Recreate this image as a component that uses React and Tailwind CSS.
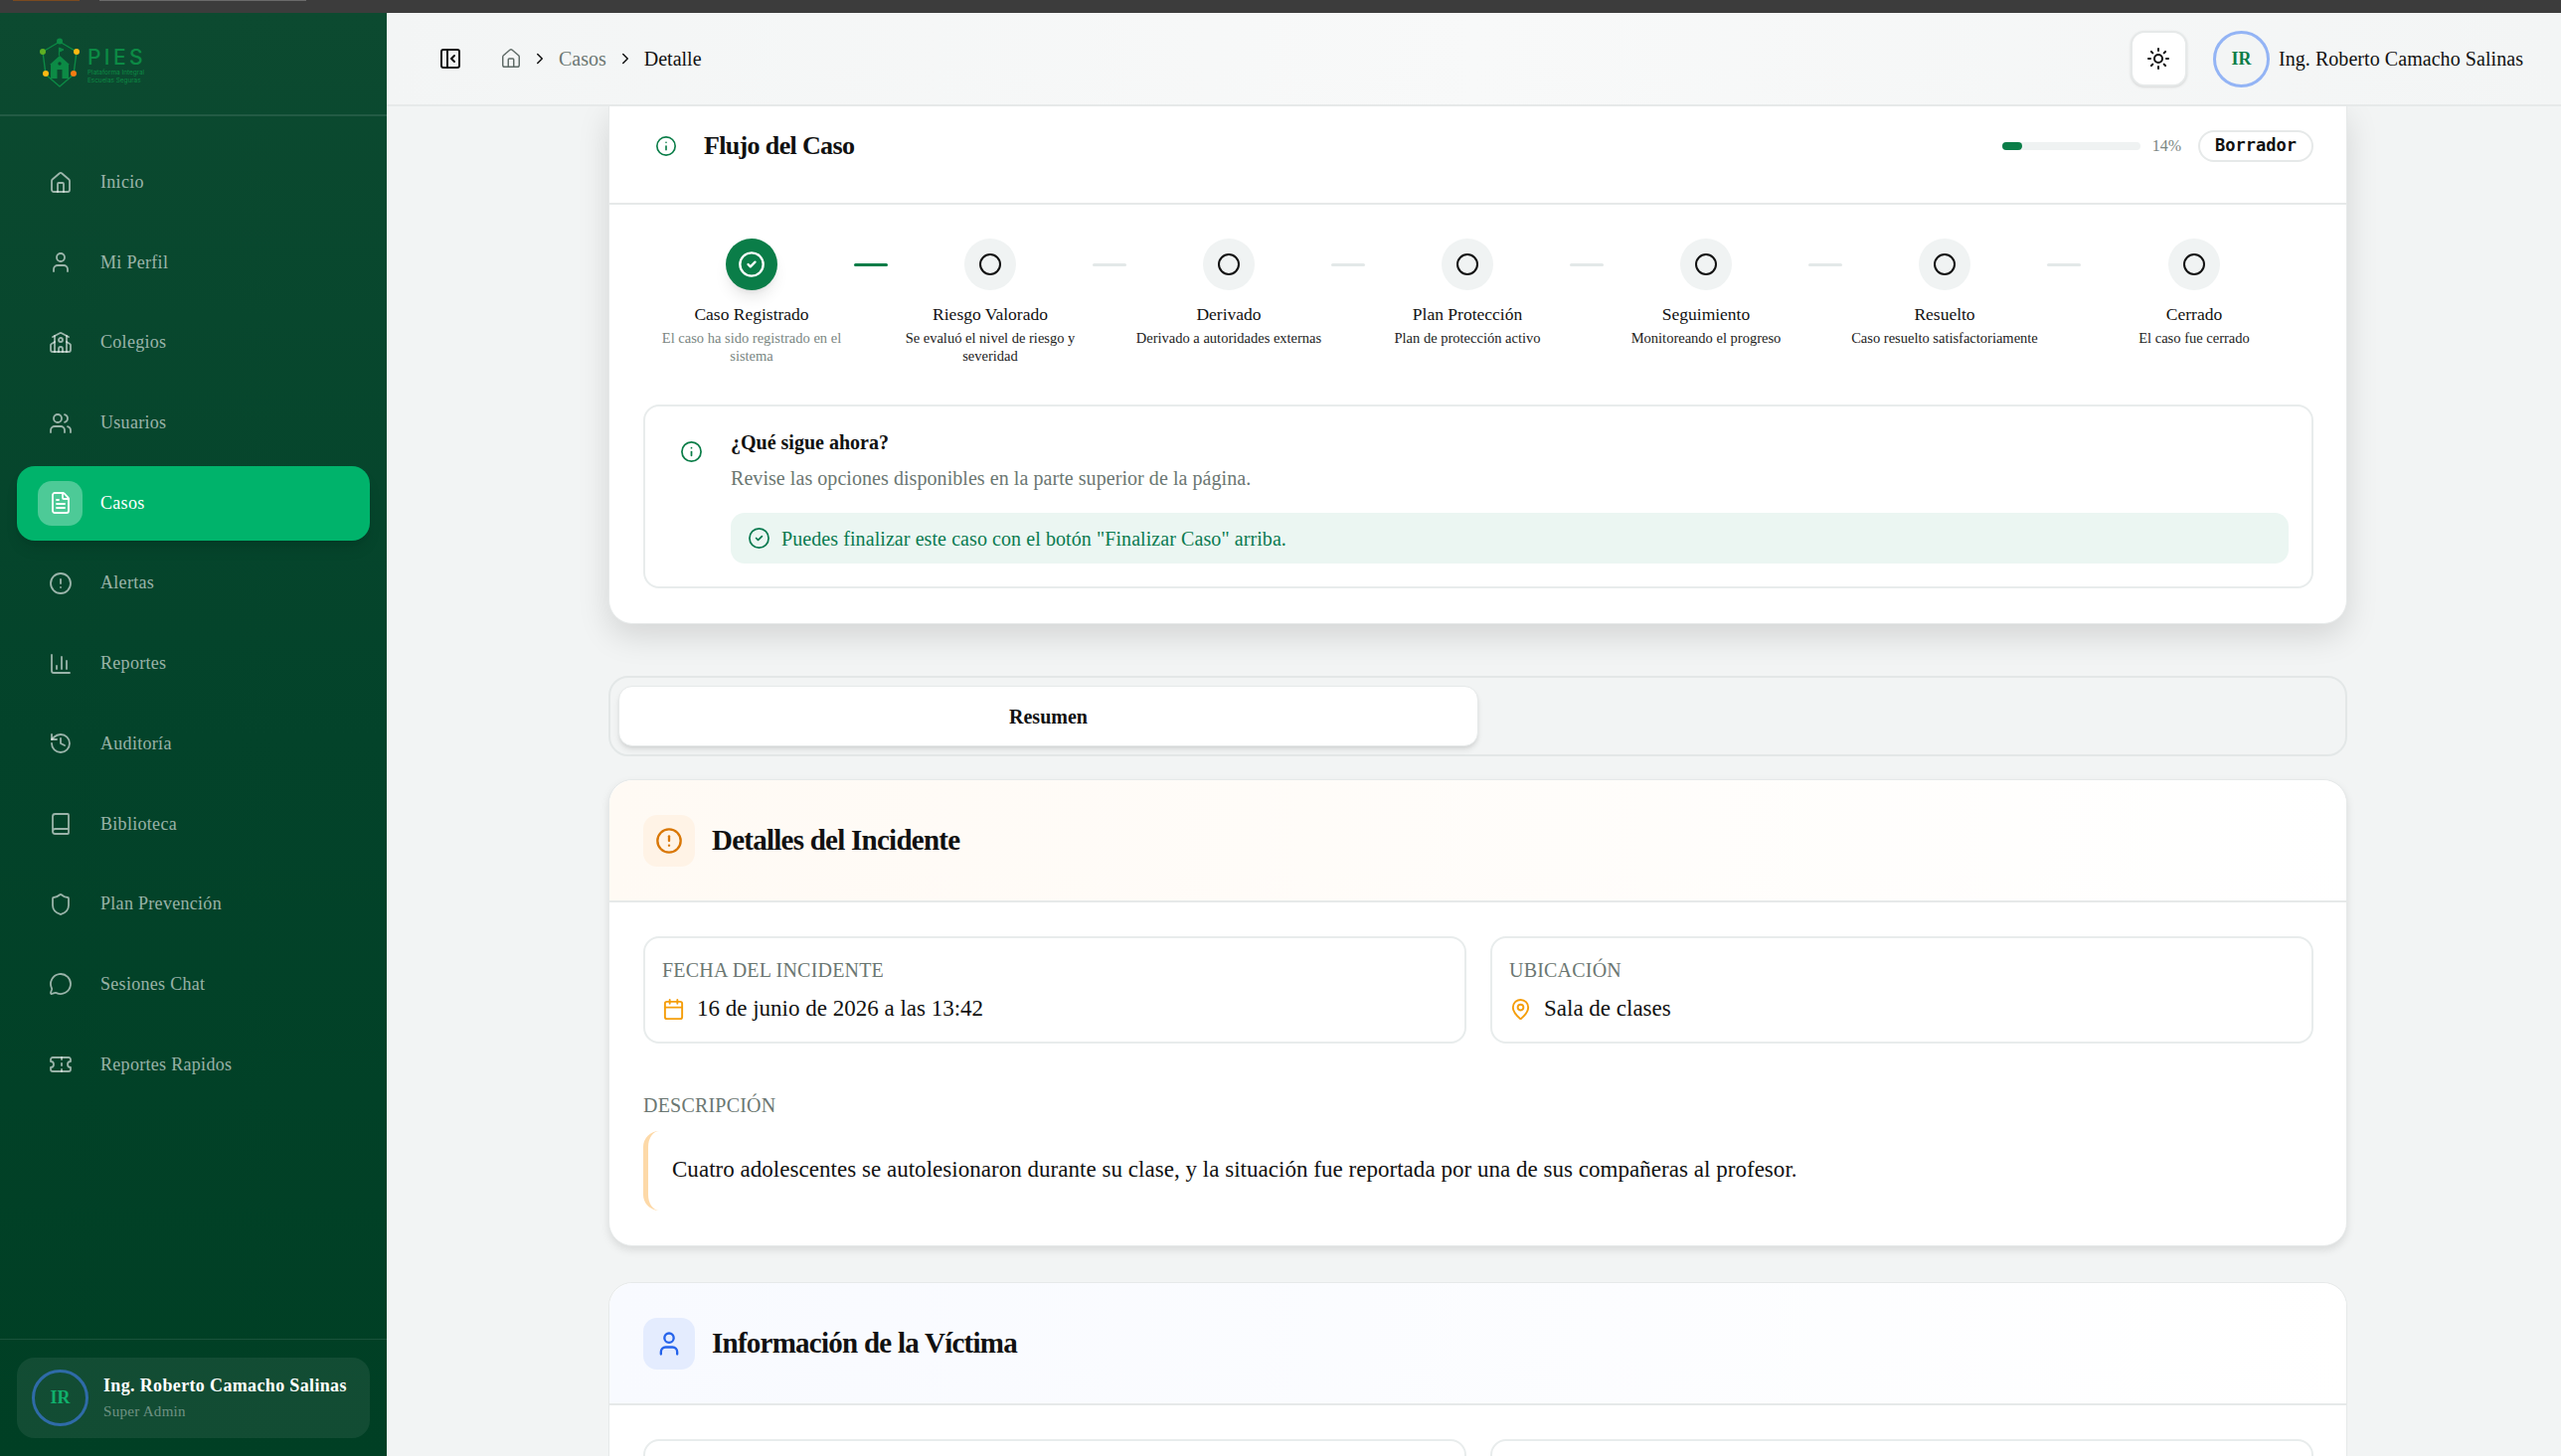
import React from "react";
import {
  Book,
  Calendar,
  ChartColumn,
  ChevronRight,
  Circle,
  CircleAlert,
  CircleCheck,
  FileText,
  History,
  House,
  Info,
  MapPin,
  MessageCircle,
  PanelLeftClose,
  School,
  Shield,
  Sun,
  Ticket,
  User,
  Users,
} from "lucide-react";

const NAV = [
  { label: "Inicio", icon: House },
  { label: "Mi Perfil", icon: User },
  { label: "Colegios", icon: School },
  { label: "Usuarios", icon: Users },
  { label: "Casos", icon: FileText, active: true },
  { label: "Alertas", icon: CircleAlert },
  { label: "Reportes", icon: ChartColumn },
  { label: "Auditoría", icon: History },
  { label: "Biblioteca", icon: Book },
  { label: "Plan Prevención", icon: Shield },
  { label: "Sesiones Chat", icon: MessageCircle },
  { label: "Reportes Rapidos", icon: Ticket },
];

const STEPS = [
  { title: "Caso Registrado", desc: "El caso ha sido registrado en el sistema", done: true },
  { title: "Riesgo Valorado", desc: "Se evaluó el nivel de riesgo y severidad" },
  { title: "Derivado", desc: "Derivado a autoridades externas" },
  { title: "Plan Protección", desc: "Plan de protección activo" },
  { title: "Seguimiento", desc: "Monitoreando el progreso" },
  { title: "Resuelto", desc: "Caso resuelto satisfactoriamente" },
  { title: "Cerrado", desc: "El caso fue cerrado", last: true },
];

const Logo = () => (
  <div className="flex items-start gap-[7px]">
    <svg width="42" height="52" viewBox="0 0 42 52" fill="none">
      <path
        d="M21 5 L4 15 L7 38 L21 50 L35 38 L38 15 Z"
        stroke="#0c8a45"
        strokeWidth="1.4"
        strokeLinejoin="round"
      />
      <path d="M21 19 L31 28 L30 28 L30 42 L12 42 L12 28 L11 28 Z" fill="#0c8a45" />
      <path d="M20.4 19 V11 L25 13 L21 15" fill="#0c8a45" stroke="#0c8a45" strokeWidth="1" />
      <rect x="18.5" y="33" width="5" height="9" fill="#0b4a2f" />
      <circle cx="21" cy="27" r="1.7" fill="#0b4a2f" />
      <circle cx="21" cy="4.5" r="3" fill="#0c8a45" />
      <circle cx="4" cy="15" r="3" fill="#5fb023" />
      <circle cx="38" cy="15" r="3" fill="#fdb913" />
      <circle cx="7" cy="37" r="3" fill="#fdb913" />
      <circle cx="35" cy="37" r="3" fill="#f57c13" />
    </svg>
    <div className="mt-[10px] flex flex-col font-['Inter',sans-serif] text-[#0c8a45]">
      <span className="text-[21px] font-medium leading-[22px] tracking-[3.4px]">PIES</span>
      <span className="mt-[1px] text-[6.4px] leading-[7.5px]">Plataforma Integral</span>
      <span className="text-[6.4px] leading-[7.5px]">Escuelas Seguras</span>
    </div>
  </div>
);

const Sidebar = () => (
  <aside className="flex w-[389px] shrink-0 flex-col bg-linear-to-b from-[#0c4a30] via-[#03432a] to-[#003f24]">
    <div className="h-[104px] shrink-0 border-b-2 border-white/10 pl-[39px] pt-[24px]">
      <Logo />
    </div>
    <nav className="flex flex-1 flex-col gap-[5.7px] px-[17px] pt-[29px]">
      {NAV.map((item) => {
        const Icon = item.icon;
        return (
          <div
            key={item.label}
            className={
              item.active
                ? "flex h-[75px] items-center gap-[18px] rounded-[18px] bg-[#00b36b] pl-[21px] text-white shadow-lg"
                : "flex h-[75px] items-center gap-[18px] rounded-[18px] pl-[21px] text-white/60"
            }
          >
            <div
              className={
                item.active
                  ? "flex h-[45px] w-[45px] items-center justify-center rounded-[14px] bg-white/30"
                  : "flex h-[45px] w-[45px] items-center justify-center"
              }
            >
              <Icon size={24} strokeWidth={1.8} />
            </div>
            <span className="text-[18px] tracking-[0.3px]">{item.label}</span>
          </div>
        );
      })}
    </nav>
    <div className="shrink-0 border-t border-white/10 px-[17px] py-[18px]">
      <div className="flex h-[81px] items-center gap-[15px] rounded-[18px] bg-white/7 pl-[15px]">
        <div className="flex h-[57px] w-[57px] items-center justify-center rounded-full border-[3px] border-[#2f6ba8]">
          <span className="text-[18px] font-bold text-[#10b06c]">IR</span>
        </div>
        <div className="flex flex-col">
          <span className="text-[18px] font-bold leading-[24px] tracking-[0.35px] text-white">
            Ing. Roberto Camacho Salinas
          </span>
          <span className="mt-[3px] text-[15px] leading-[22px] tracking-[0.3px] text-white/40">
            Super Admin
          </span>
        </div>
      </div>
    </div>
  </aside>
);

const Header = () => (
  <header className="flex h-[94px] shrink-0 items-center border-b-2 border-[#e6e9e9] bg-linear-to-r from-[#f3f5f5] via-[#f8f9f9] to-[#f3f5f5] pl-[52px] pr-[38px]">
    <PanelLeftClose size={24} strokeWidth={2} className="text-[#111]" />
    <div className="ml-[38px] flex items-center text-[20px]">
      <House size={22} strokeWidth={1.6} className="text-[#5f6b67]" />
      <ChevronRight size={18} strokeWidth={2} className="ml-[9px] text-[#111]" />
      <span className="ml-[10px] text-[#6b7772]">Casos</span>
      <ChevronRight size={18} strokeWidth={2} className="ml-[10px] text-[#111]" />
      <span className="ml-[10px] text-[#111]">Detalle</span>
    </div>
    <div className="ml-auto flex items-center">
      <button className="flex h-[56px] w-[57px] items-center justify-center rounded-[14px] border-2 border-[#e6e9e9] bg-white shadow-sm">
        <Sun size={24} strokeWidth={2} className="text-[#111]" />
      </button>
      <div className="ml-[26px] flex h-[57px] w-[57px] items-center justify-center rounded-full border-[3px] border-[#93b4f5] bg-[#f3f5f5]">
        <span className="text-[18px] font-bold text-[#0a7d48]">IR</span>
      </div>
      <span className="ml-[9px] text-[20px] tracking-[0.06px] text-[#111]">
        Ing. Roberto Camacho Salinas
      </span>
    </div>
  </header>
);

const Stepper = () => (
  <div className="flex items-start pl-[50px] pt-[34px]">
    {STEPS.map((step, i) => (
      <React.Fragment key={step.title}>
        <div
          className={
            step.last
              ? "flex w-[208px] shrink-0 flex-col items-center text-center"
              : "flex w-[186px] shrink-0 flex-col items-center text-center"
          }
        >
          {step.done ? (
            <div className="flex h-[52px] w-[52px] items-center justify-center rounded-full bg-[#0a7d48] text-white shadow-lg">
              <CircleCheck size={28} strokeWidth={2} />
            </div>
          ) : (
            <div className="flex h-[52px] w-[52px] items-center justify-center rounded-full bg-[#f0f3f3] text-[#111]">
              <Circle size={24} strokeWidth={2} />
            </div>
          )}
          <span className="mt-[13px] text-[17.5px] leading-[22px] text-[#111]">{step.title}</span>
          <span
            className={
              step.done
                ? "mt-[4px] w-[192px] shrink-0 text-[14.5px] leading-[18px] text-[#7a8682]"
                : "mt-[4px] w-[192px] shrink-0 text-[14.5px] leading-[18px] text-[#222]"
            }
          >
            {step.desc}
          </span>
        </div>
        {!step.last && (
          <div
            className={
              i === 0
                ? "mx-[10px] mt-[25px] h-[3px] w-[34px] shrink-0 rounded-full bg-[#0a7d48]"
                : "mx-[10px] mt-[25px] h-[3px] w-[34px] shrink-0 rounded-full bg-[#e3e8e8]"
            }
          />
        )}
      </React.Fragment>
    ))}
  </div>
);

const FlowCard = () => (
  <section className="rounded-b-[24px] border-x border-b border-[#e6e9e9] bg-white shadow-[0_12px_32px_rgba(0,0,0,0.13)]">
    <div className="flex h-[99px] items-center border-b-2 border-[#e6e9e9] pb-[18px] pl-[46px] pr-[33px]">
      <Info size={22} strokeWidth={1.8} className="text-[#0a7d48]" />
      <h2 className="ml-[27px] text-[26px] font-bold tracking-[-0.65px] text-[#111]">Flujo del Caso</h2>
      <div className="ml-auto flex items-center">
        <div className="h-[8px] w-[139px] rounded-full bg-[#eff2f2]">
          <div className="h-[8px] w-[20px] rounded-full bg-[#0a7d48]" />
        </div>
        <span className="ml-[12px] text-[16px] text-[#7a8682]">14%</span>
        <span className="ml-[17px] flex h-[32px] w-[116px] items-center justify-center rounded-full border-2 border-[#e6e9e9] font-['DejaVu_Sans_Mono',monospace] text-[17px] font-bold text-[#111]">
          Borrador
        </span>
      </div>
    </div>
    <Stepper />
    <div className="mb-[35px] ml-[34px] mr-[33px] mt-[40px] flex h-[185px] rounded-[16px] border-2 border-[#e8ecec] pl-[35px] pr-[23px] pt-[24px]">
      <Info size={23} strokeWidth={1.8} className="mt-[10px] shrink-0 text-[#0a7d48]" />
      <div className="ml-[28px] flex-1">
        <h3 className="text-[20px] font-bold leading-[24px] text-[#111]">¿Qué sigue ahora?</h3>
        <p className="mt-[11px] text-[20px] leading-[26px] tracking-[0.06px] text-[#6b7772]">
          Revise las opciones disponibles en la parte superior de la página.
        </p>
        <div className="mt-[22px] flex h-[51px] items-center rounded-[14px] bg-[#ebf6f2] pl-[17px] text-[#0a7a50]">
          <CircleCheck size={23} strokeWidth={1.8} />
          <span className="ml-[11px] text-[20px] tracking-[0.08px]">
            Puedes finalizar este caso con el botón "Finalizar Caso" arriba.
          </span>
        </div>
      </div>
    </div>
  </section>
);

const Tabs = () => (
  <div className="mt-[52px] h-[81px] rounded-[20px] border-2 border-[#e3e7e7] bg-[#f2f4f4] p-[8px]">
    <div className="flex h-[61px] w-[865px] items-center justify-center rounded-[14px] border border-[#e6e9e9] bg-white text-[20px] font-bold text-[#111] shadow-md">
      Resumen
    </div>
  </div>
);

const CardHeader = ({ icon: Icon, title, headerClass, boxClass, iconClass }) => (
  <div className={`flex h-[123px] items-center rounded-t-[24px] border-b-2 border-[#e6e9e9] pl-[34px] ${headerClass}`}>
    <div className={`flex h-[52px] w-[52px] items-center justify-center rounded-[14px] ${boxClass}`}>
      <Icon size={28} strokeWidth={2} className={iconClass} />
    </div>
    <h2 className="ml-[17px] text-[29px] font-bold tracking-[-0.75px] text-[#111]">{title}</h2>
  </div>
);

const Field = ({ label, icon: Icon, value }) => (
  <div className="h-[108px] rounded-[16px] border-2 border-[#e8ecec] pl-[17px] pt-[19px]">
    <div className="text-[20px] uppercase leading-[26px] tracking-[0.2px] text-[#6b7772]">{label}</div>
    <div className="mt-[12px] flex items-center">
      <Icon size={23} strokeWidth={2} className="text-[#f59e0b]" />
      <span className="ml-[12px] text-[23px] leading-[28px] text-[#111]">{value}</span>
    </div>
  </div>
);

const IncidentCard = () => (
  <section className="mt-[23px] h-[470px] rounded-[24px] border border-[#e6e9e9] bg-white shadow-[0_4px_8px_rgba(0,0,0,0.1)]">
    <CardHeader
      icon={CircleAlert}
      title="Detalles del Incidente"
      headerClass="bg-linear-to-r from-[#fffaf4] to-white"
      boxClass="bg-[#fff3e6]"
      iconClass="text-[#d97706]"
    />
    <div className="pl-[34px] pr-[33px] pt-[34px]">
      <div className="grid grid-cols-2 gap-[24px]">
        <Field label="Fecha del incidente" icon={Calendar} value="16 de junio de 2026 a las 13:42" />
        <Field label="Ubicación" icon={MapPin} value="Sala de clases" />
      </div>
      <div className="mt-[49px] text-[20px] uppercase leading-[26px] tracking-[0.2px] text-[#6b7772]">
        Descripción
      </div>
      <div className="mt-[13px] flex h-[80px] items-center rounded-l-[16px] border-l-[5px] border-[#fdd9a8] pb-[2px] pl-[24px] text-[23px] tracking-[0.03px] text-[#111]">
        Cuatro adolescentes se autolesionaron durante su clase, y la situación fue reportada por una de sus compañeras al profesor.
      </div>
    </div>
  </section>
);

const VictimCard = () => (
  <section className="mt-[36px] rounded-[24px] border border-[#e6e9e9] bg-white">
    <CardHeader
      icon={User}
      title="Información de la Víctima"
      headerClass="bg-linear-to-r from-[#f8faff] to-white"
      boxClass="bg-[#e4ecfe]"
      iconClass="text-[#2563eb]"
    />
    <div className="grid grid-cols-2 gap-[24px] pl-[34px] pr-[33px] pt-[34px]">
      <div className="h-[108px] rounded-[16px] border-2 border-[#e8ecec]" />
      <div className="h-[108px] rounded-[16px] border-2 border-[#e8ecec]" />
    </div>
  </section>
);

export default function App() {
  return (
    <div className="flex h-[1465px] w-[2576px] flex-col overflow-hidden bg-[#f2f4f4] font-['Liberation_Serif',serif]">
      <div className="flex h-[13px] shrink-0 items-start bg-[#3c3c3c] pl-[13px]">
        <div className="h-[1px] w-[67px] bg-[#7a4a20]" />
        <div className="ml-[20px] h-[1px] w-[208px] bg-[#6a6a6a]" />
      </div>
      <div className="flex min-h-0 flex-1">
        <Sidebar />
        <div className="flex min-w-0 flex-1 flex-col">
          <Header />
          <main className="min-h-0 flex-1 overflow-hidden pl-[223px] pr-[215px]">
            <FlowCard />
            <Tabs />
            <IncidentCard />
            <VictimCard />
          </main>
        </div>
      </div>
    </div>
  );
}
